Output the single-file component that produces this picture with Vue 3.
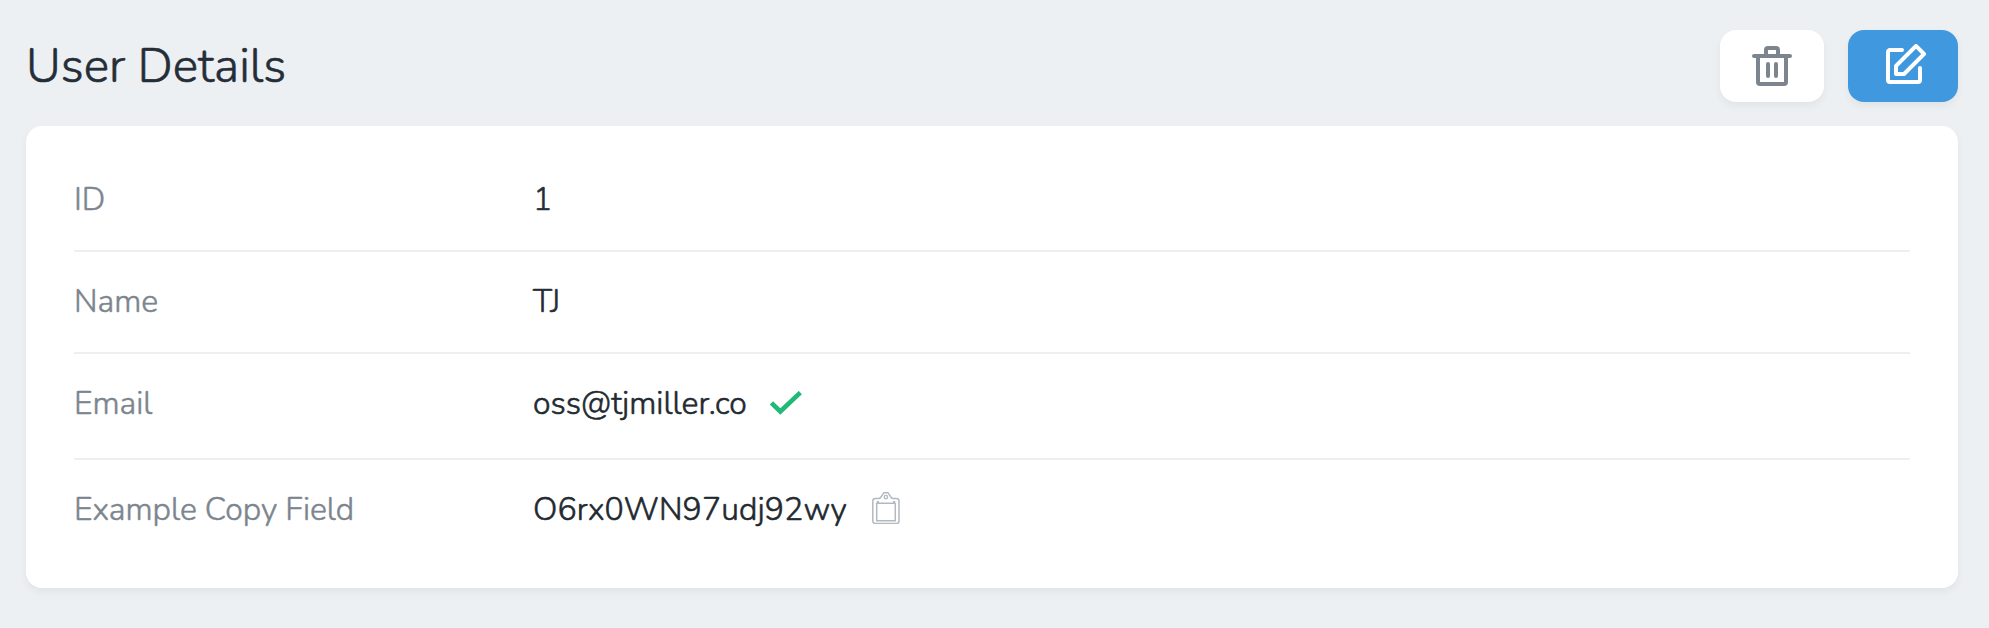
<script setup>
const fields = [
  { name: 'ID', value: '1', kind: 'id' },
  { name: 'Name', value: 'TJ', kind: 'name' },
  { name: 'Email', value: 'oss@tjmiller.co', kind: 'email' },
  { name: 'Example Copy Field', value: 'O6rx0WN97udj92wy', kind: 'copy' }
]
</script>

<template>
  <main class="page">
    <header class="header">
      <h1 class="title">User Details</h1>
      <div class="actions">
        <button class="button delete" aria-label="Delete">
          <svg width="40" height="40" viewBox="0 0 20 20" fill="currentColor">
            <path d="M6 4V2a2 2 0 0 1 2-2h4a2 2 0 0 1 2 2v2h5a1 1 0 0 1 0 2h-1v12a2 2 0 0 1-2 2H4a2 2 0 0 1-2-2V6H1a1 1 0 1 1 0-2h5zM4 6v12h12V6H4zm8-2V2H8v2h4zM8 8a1 1 0 0 1 1 1v6a1 1 0 0 1-2 0V9a1 1 0 0 1 1-1zm4 0a1 1 0 0 1 1 1v6a1 1 0 0 1-2 0V9a1 1 0 0 1 1-1z" />
          </svg>
        </button>
        <button class="button edit" aria-label="Edit">
          <svg width="40" height="40" viewBox="0 0 20 20" fill="currentColor">
            <path d="M4.3 10.3l10-10a1 1 0 0 1 1.4 0l4 4a1 1 0 0 1 0 1.4l-10 10a1 1 0 0 1-.7.3H5a1 1 0 0 1-1-1v-4a1 1 0 0 1 .3-.7zM6 14h2.59l9-9L15 2.41l-9 9V14zm10-2a1 1 0 0 1 2 0v6a2 2 0 0 1-2 2H2a2 2 0 0 1-2-2V4c0-1.1.9-2 2-2h6a1 1 0 1 1 0 2H2v14h14v-6z" />
          </svg>
        </button>
      </div>
    </header>
    <section class="card">
      <div v-for="f in fields" :key="f.kind" class="row" :class="f.kind">
        <div class="label">{{ f.name }}</div>
        <div class="value">
          <span>{{ f.value }}</span>
          <svg v-if="f.kind === 'email'" class="check" width="34" height="26" viewBox="0 0 34 26">
            <path d="M2.4 11.8 11.3 20.5 31.3 1.6" fill="none" stroke="#21b978" stroke-width="4.6" />
          </svg>
          <svg v-if="f.kind === 'copy'" class="clip" width="28" height="32" viewBox="0 0 28 32" fill="none" stroke="#b3b9c0">
            <path stroke-width="1.5" d="M3.5 6.5H7C9 6.3 8.7 4.7 10 3.5C11 2.8 10.8.7 12.5.7h2.8c1.7 0 1.5 2.1 2.5 2.8 1.3 1.2 1 2.8 3 3h3.5Q27 6.5 27 9v20q0 2.4-2.4 2.4H3.2Q.8 31.4.8 29V9Q.8 6.5 3.5 6.5Z" />
            <path stroke-width="1.5" d="M4.7 11V28.7H23.3V11M4.7 11.2H23.3M4.7 9.7H7M21 9.7h2.3" />
            <circle cx="13.9" cy="5.1" r="1.7" stroke-width="1.4" />
          </svg>
        </div>
      </div>
    </section>
  </main>
</template>

<style>
body { margin: 0; background: #ecf0f3; }
</style>

<style scoped>
.page {
  box-sizing: border-box;
  width: 100%;
  min-height: 628px;
  padding: 30px 31px 40px 26px;
  background: #ecf0f3;
  font-family: Nunito, Lato, sans-serif;
  color: #22292f;
}
.header { display: flex; justify-content: space-between; height: 96px; }
.title {
  margin: 6px 0 0;
  font-size: 48px;
  line-height: 60px;
  font-weight: 300;
  color: #252d37;
  -webkit-text-stroke: 0.6px currentColor;
}
.actions { display: flex; gap: 24px; }
.button {
  display: flex;
  align-items: center;
  justify-content: center;
  height: 72px;
  padding: 0;
  border: 0;
  border-radius: 16px;
  box-shadow: 0 4px 8px rgba(0, 0, 0, 0.05);
}
.delete { width: 104px; background: #fff; color: #7c858e; }
.edit { width: 110px; background: #4099de; color: #fff; }
.edit svg { margin: -4px 0 0 6px; }
.card {
  box-sizing: border-box;
  height: 462px;
  padding: 24px 48px;
  background: #fff;
  border-radius: 16px;
  box-shadow: 0 4px 8px rgba(0, 0, 0, 0.05);
}
.row {
  box-sizing: border-box;
  display: grid;
  grid-template-columns: 459px 1fr;
  height: 102px;
  padding-top: 29px;
  border-bottom: 2px solid #ecf0f3;
  font-size: 32px;
  line-height: 42px;
}
.row.email { height: 106px; }
.row.copy { height: 104px; border-bottom: 0; }
.label {
  color: #7c858e;
  font-weight: 300;
  -webkit-text-stroke: 0.5px currentColor;
}
.value { display: flex; font-weight: 300; -webkit-text-stroke: 0.6px currentColor; }
.id .value, .name .value { color: #252d37; }
.copy .value { letter-spacing: 0.1px; }
.check { margin: 8px 0 0 22px; }
.clip { margin: 3px 0 0 25px; }
</style>
